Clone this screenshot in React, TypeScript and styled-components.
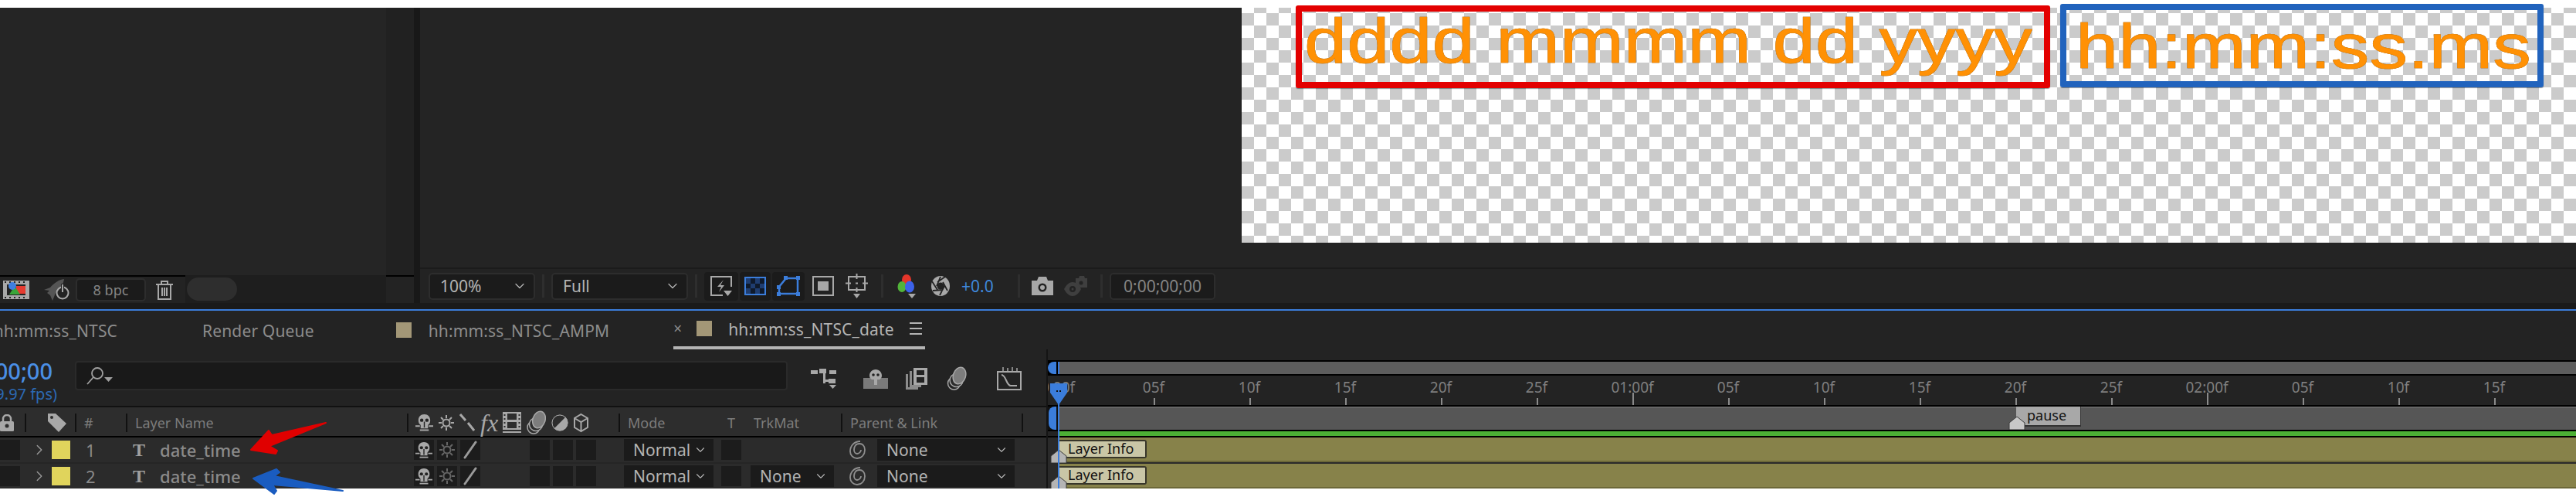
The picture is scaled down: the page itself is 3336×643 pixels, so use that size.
import React from "react";
import styled, { createGlobalStyle } from "styled-components";
import { ChevronDown, ChevronRight } from "lucide-react";

const ICON = "#a8a8a8";
const BLUE = "#3b7ddb";

const GlobalStyle = createGlobalStyle`
  html, body {
    margin: 0;
    background: #fff;
  }
  * {
    box-sizing: border-box;
  }
  #root {
    font-family: "Noto Sans", sans-serif;
  }
`;

const Page = styled.div`
  position: relative;
  width: 3336px;
  height: 643px;
  padding-top: 10px;
  background: #fff;
  overflow: hidden;
`;

/* ---------- viewers ---------- */

const ViewerRow = styled.div`
  display: flex;
  height: 382px;
`;

const LeftViewer = styled.div`
  display: flex;
  flex-direction: column;
  width: 536px;
  background: #242424;
`;

const LeftCanvas = styled.div`
  flex: 1;
  background: linear-gradient(to right, #252525 500px, #212121 500px);
`;

const LeftToolbar = styled.div`
  display: flex;
  align-items: center;
  height: 36px;
  border-top: 2px solid #000;
  background: #232323;
`;

const ViewerDivider = styled.div`
  width: 8px;
  background: #181818;
`;

const RightViewer = styled.div`
  display: flex;
  flex: 1;
  flex-direction: column;
  background: #242424;
`;

const RightCanvas = styled.div`
  display: flex;
  height: 336px;
  padding-left: 1064px;
`;

const Checker = styled.div`
  position: relative;
  flex: 1;
  height: 304px;
  background: conic-gradient(#cbcbcb 25%, #fff 0 50%, #cbcbcb 0 75%, #fff 0);
  background-size: 32px 32px;
  background-position: 0 -9px;
`;

const AnnotationBox = styled.div<{ $color: string; $left: number; $top: number; $w: number; $h: number }>`
  position: absolute;
  left: ${(p) => p.$left}px;
  top: ${(p) => p.$top}px;
  width: ${(p) => p.$w}px;
  height: ${(p) => p.$h}px;
  border: 8px solid ${(p) => p.$color};
  border-radius: 3px;
  box-shadow: 0 1px 1px #0006;
`;

const CompText = styled.span<{ $x: number; $y: number }>`
  position: absolute;
  left: ${(p) => p.$x}px;
  top: ${(p) => p.$y}px;
  font-family: "Liberation Sans", sans-serif;
  font-size: 82px;
  line-height: 1;
  white-space: nowrap;
  color: #ff9105;
  -webkit-text-stroke: 0.7px #ff9105;
  filter: drop-shadow(0 0 0.5px #555);
  transform: scaleX(1.21);
  transform-origin: left top;
`;

const RightToolbar = styled.div`
  display: flex;
  align-items: center;
  height: 46px;
  border-top: 2px solid #1b1b1b;
  background: #232323;
`;

const Slot = styled.div<{ $ml?: number; $w?: number }>`
  display: flex;
  flex: none;
  align-items: center;
  margin-left: ${(p) => p.$ml ?? 0}px;
  ${(p) => (p.$w ? `width: ${p.$w}px;` : "")}
`;

const SelectBox = styled.div<{ $ml: number; $w: number; $center?: boolean; $h?: number }>`
  display: flex;
  flex: none;
  align-items: center;
  justify-content: ${(p) => (p.$center ? "center" : "space-between")};
  width: ${(p) => p.$w}px;
  height: ${(p) => p.$h ?? 35}px;
  margin-left: ${(p) => p.$ml}px;
  padding: 0 8px 0 13px;
  border: 2px solid #2d2d2d;
  border-radius: 5px;
  background: #1b1b1b;
  font-size: 21px;
  color: #b4b4b4;
  ${(p) => (p.$center ? "padding: 0; color: #858585;" : "")}
`;

const ToolSeparator = styled.div<{ $ml: number }>`
  flex: none;
  width: 3px;
  height: 30px;
  margin-left: ${(p) => p.$ml}px;
  background: #2e2e2e;
`;

const ToggleCell = styled.div<{ $ml: number; $w: number }>`
  display: flex;
  flex: none;
  align-items: center;
  justify-content: center;
  width: ${(p) => p.$w}px;
  height: 37px;
  margin-left: ${(p) => p.$ml}px;
  border-radius: 4px;
  background: #1b1b1b;
`;

const Exposure = styled.span`
  font-size: 21px;
  color: #3f88dd;
`;

const BpcBox = styled(SelectBox)`
  height: 30px;
  font-size: 18px;
`;

const DarkStrip = styled.div`
  display: flex;
  align-items: center;
  align-self: stretch;
  width: 260px;
  margin: -2px 0 0 16px;
  background: #1e1e1e;
`;

const Pill = styled.div`
  width: 65px;
  height: 30px;
  margin-left: 2px;
  border-radius: 15px;
  background: #2e2e2e;
`;

const Band = styled.div`
  height: 8px;
  background: #1a1a1a;
`;

const BlueLine = styled.div`
  height: 2px;
  background: ${BLUE};
`;

/* ---------- comp tabs ---------- */

const TabBar = styled.div`
  display: flex;
  align-items: center;
  height: 50px;
  background: #232323;
  font-size: 21px;
  letter-spacing: 0.15px;
  color: #8c8c8c;
  white-space: nowrap;
`;

const FirstTab = styled.div`
  display: flex;
  flex: none;
  justify-content: flex-end;
  width: 152px;
  padding-top: 2px;
`;

const TabLabel = styled.span<{ $ml: number; $active?: boolean }>`
  flex: none;
  margin-left: ${(p) => p.$ml}px;
  padding-top: 2px;
  ${(p) => (p.$active ? "color: #b4b4b4;" : "")}
`;

const Swatch = styled.span<{ $ml: number }>`
  flex: none;
  width: 20px;
  height: 20px;
  margin-left: ${(p) => p.$ml}px;
  background: #a39777;
`;

const ActiveTab = styled.div`
  display: flex;
  flex: none;
  align-items: center;
  align-self: stretch;
  width: 326px;
  margin-left: 83px;
  border-bottom: 4px solid #b4b4b4;
`;

const TabClose = styled.span`
  width: 10px;
  font-size: 19px;
  color: #8c8c8c;
`;

const TabMenu = styled.span`
  width: 16px;
  height: 16px;
  margin-left: 20px;
  background: repeating-linear-gradient(#b4b4b4 0 2px, transparent 2px 7px);
`;

/* ---------- timeline, left side ---------- */

const TimelineBody = styled.div`
  display: flex;
  height: 180px;
`;

const LeftPane = styled.div`
  flex: none;
  width: 1357px;
  border-right: 2px solid #141414;
  background: #232323;
`;

const ToolRow = styled.div`
  display: flex;
  align-items: center;
  height: 75px;
  padding-top: 3px;
  border-bottom: 2px solid #111;
`;

const TimeBlock = styled.div`
  display: flex;
  flex: none;
  flex-direction: column;
  align-items: flex-end;
  width: 74px;
  margin-top: 8px;
  white-space: nowrap;
`;

const TimeCode = styled.div`
  padding-right: 6px;
  font-size: 29px;
  line-height: 32px;
  font-weight: 500;
  color: #4a8fe6;
`;

const Fps = styled.div`
  font-size: 20px;
  line-height: 28px;
  color: #2c69b3;
`;

const SearchBox = styled.div`
  display: flex;
  flex: none;
  align-items: center;
  width: 923px;
  height: 38px;
  margin: -8px 0 0 23px;
  padding-left: 13px;
  border: 2px solid #2a2a2a;
  border-radius: 4px;
  background: #191919;
`;

const LayerGrid = styled.div`
  display: grid;
  grid-template-columns: 32px 65px 66px 364px 274px 133px 38px 117px 234px 32px;
  align-items: center;
`;

const HeaderRow = styled(LayerGrid)`
  height: 37px;
  padding-top: 2px;
  background: #2d2d2d;
  font-size: 18px;
  color: #7c7c7c;
`;

const HeaderCell = styled.div<{ $gap?: number }>`
  display: flex;
  align-items: center;
  gap: ${(p) => p.$gap ?? 10}px;
  white-space: nowrap;
`;

const ColumnRule = styled.span`
  flex: none;
  width: 2px;
  height: 24px;
  background: #111;
`;

const SwitchIcons = styled.div`
  display: flex;
  align-items: center;
  gap: 7px;
`;

const FxLabel = styled.span`
  width: 22px;
  font-family: "Liberation Serif", serif;
  font-size: 32px;
  font-style: italic;
  line-height: 1;
  color: ${ICON};
`;

const LayerRow = styled(LayerGrid)<{ $last?: boolean }>`
  height: ${(p) => (p.$last ? 32 : 36)}px;
  padding-bottom: ${(p) => (p.$last ? 0 : 2)}px;
  border-top: ${(p) => (p.$last ? "none" : "2px solid #000")};
  background: ${(p) => (p.$last ? "#2b2b2b" : "linear-gradient(#2b2b2b 32px, #252525 32px)")};
  font-size: 21px;
  color: #8a8a8a;
`;

const RowCell = styled.div<{ $pad?: number }>`
  display: flex;
  align-items: center;
  padding-left: ${(p) => p.$pad ?? 0}px;
  white-space: nowrap;
`;

const SwitchCell = styled.div<{ $ml?: number }>`
  display: flex;
  flex: none;
  align-items: center;
  justify-content: center;
  width: 26px;
  height: 26px;
  margin-left: ${(p) => p.$ml ?? 0}px;
  background: #1c1c1c;
`;

const LabelChip = styled.span`
  flex: none;
  width: 24px;
  height: 24px;
  margin-left: 5px;
  background: #e0d45c;
`;

const LayerNumber = styled.span`
  padding-left: 14px;
  font-size: 22px;
  color: #8a8a8a;
`;

const TypeGlyph = styled.span`
  width: 16px;
  font-family: "Liberation Serif", serif;
  font-size: 24px;
  font-weight: 700;
  line-height: 1;
  color: #a0a0a0;
`;

const LayerName = styled.span`
  margin-left: 19px;
  font-size: 22px;
  font-weight: 500;
  color: #8a8a8a;
`;

const RowSelect = styled.div<{ $w: number }>`
  display: flex;
  flex: none;
  align-items: center;
  justify-content: space-between;
  width: ${(p) => p.$w}px;
  height: 28px;
  padding: 0 8px 0 12px;
  background: #1b1b1b;
  color: #b4b4b4;
`;

/* ---------- timeline, right side ---------- */

const RightPane = styled.div`
  position: relative;
  flex: 1;
  overflow: hidden;
  background: #232323;
`;

const NavBar = styled.div`
  display: flex;
  height: 20px;
  margin-top: 14px;
  border-top: 2px solid #000;
  border-bottom: 2px solid #000;
  background: #000;
`;

const CapLeft = styled.div<{ $ml: number; $w: number }>`
  flex: none;
  width: ${(p) => p.$w}px;
  margin-left: ${(p) => p.$ml}px;
  border-radius: 8px 0 0 8px;
  background: ${BLUE};
`;

const GreyFill = styled.div`
  flex: 1;
  margin-left: 2px;
  border-left: 2px solid #3a78d8;
  background: #5d5d5d;
`;

const Ruler = styled.div`
  display: flex;
  height: 38px;
  margin-left: -49px;
  background: #232323;
`;

const RulerCell = styled.div`
  position: relative;
  flex: none;
  width: 124px;
  height: 38px;
  text-align: center;
  font-size: 19px;
  line-height: 30px;
  color: #7e7e7e;
`;

const Tick = styled.span<{ $major: boolean }>`
  position: absolute;
  bottom: 0;
  left: 62px;
  width: 2px;
  height: ${(p) => (p.$major ? 16 : 9)}px;
  background: #8a8a8a;
`;

const WorkArea = styled.div`
  position: relative;
  display: flex;
  height: 34px;
  border-top: 2px solid #000;
  border-bottom: 2px solid #000;
  background: #111;
`;

const WorkFill = styled.div`
  flex: 1;
  margin-left: 2px;
  border-top: 2px solid #666;
  background: #565656;
`;

const GreenTrack = styled.div`
  height: 8px;
  padding-left: 13px;
  border-bottom: 2px solid #000;
  background: #232323;
`;

const GreenFill = styled.div`
  height: 6px;
  background: #4cb035;
`;

const Track = styled.div<{ $last?: boolean }>`
  position: relative;
  height: ${(p) => (p.$last ? 32 : 34)}px;
  padding-left: 14px;
  padding-bottom: ${(p) => (p.$last ? 0 : 2)}px;
  background: #2a2a2a;
`;

const TrackBar = styled.div`
  height: 32px;
  padding-top: 3px;
  border-bottom: 2px solid #6c6838;
  background: #87824a;
`;

const LayerInfo = styled.div`
  width: 114px;
  height: 24px;
  padding-left: 12px;
  border: 2px solid #38362a;
  border-left: none;
  border-radius: 0 3px 3px 0;
  background: #c9c6a6;
  font-size: 18px;
  line-height: 19px;
  color: #111;
`;

const MarkerFlag = styled.svg<{ $left: number; $top: number }>`
  position: absolute;
  left: ${(p) => p.$left}px;
  top: ${(p) => p.$top}px;
`;

const PauseFlag = styled.div`
  position: absolute;
  left: 1254px;
  top: 0;
  width: 84px;
  height: 26px;
  padding-left: 14px;
  border-right: 1px solid #333;
  border-bottom: 2px solid #333;
  background: #a8a8a8;
  font-size: 18px;
  line-height: 23px;
  color: #111;
`;

const Playhead = styled.svg`
  position: absolute;
  left: 2px;
  top: 44px;
  pointer-events: none;
`;

const ArrowOverlay = styled.svg`
  position: absolute;
  left: 320px;
  top: 540px;
`;

/* ---------- drawn icons ---------- */

const ShyIcon = ({ w = 23, color = ICON }: { w?: number; color?: string }) => (
  <svg width={w} height={w} viewBox="0 0 24 24">
    <path
      d="M12 1C7 1 4 4.500 4 9c0 3 1 5 3 6.500V20h10v-4.500c2-1.500 3-3.500 3-6.500 0-4.500-3-8-8-8z"
      fill={color}
    />
    <circle cx="8.500" cy="9" r="2.300" fill="#222" />
    <circle cx="15.500" cy="9" r="2.300" fill="#222" />
    <path d="M12 11v8" stroke="#222" strokeWidth="1.500" />
    <path d="M0 17h6M18 17h6M6 22.500h12" stroke={color} strokeWidth="2" />
  </svg>
);

const SunIcon = ({ color = ICON }: { color?: string }) => (
  <svg width="20" height="22" viewBox="0 0 20 22" fill="none" stroke={color} strokeWidth="2">
    <circle cx="10" cy="11" r="4.500" />
    <path d="M10 1v4M10 17v4M0 11h4M16 11h4M3 4l3 3M14 15l3 3M17 4l-3 3M6 15l-3 3" />
  </svg>
);

const CollapseIcon = () => (
  <svg width="20" height="24" viewBox="0 0 20 24" fill="none" stroke={ICON} strokeWidth="3">
    <path d="M1 1l7 8M11 12l8 10" />
  </svg>
);

const FrameIcon = () => (
  <svg width="24" height="28" viewBox="0 0 24 28">
    <path d="M0 0h24v23H0z" fill={ICON} />
    <path d="M1.500 3h2v2h-2zM1.500 8h2v2h-2zM1.500 13h2v2h-2zM1.500 18h2v2h-2zM20.500 3h2v2h-2zM20.500 8h2v2h-2zM20.500 13h2v2h-2zM20.500 18h2v2h-2z" fill="#2d2d2d" />
    <rect x="6" y="2" width="12" height="8" fill="#2d2d2d" />
    <rect x="6" y="13" width="12" height="8" fill="#2d2d2d" />
    <path d="M0 26h24" stroke={ICON} strokeWidth="2" />
  </svg>
);

const MotionBlurIcon = ({ w = 25 }: { w?: number }) => (
  <svg width={w} height="32" viewBox="0 0 25 32" fill="none" stroke={ICON} strokeWidth="1.500">
    <circle cx="9" cy="22" r="8" />
    <circle cx="12" cy="18" r="8.500" fill="#2d2d2d" />
    <ellipse cx="16" cy="12" rx="8" ry="11" fill="#7d7d7d" transform="rotate(18 16 12)" />
  </svg>
);

const AdjustIcon = () => (
  <svg width="22" height="26" viewBox="0 0 22 26">
    <circle cx="11" cy="13" r="10.500" fill={ICON} />
    <path d="M3.500 20.500L18.500 5.500A10.500 10.500 0 0 0 3.500 20.500z" fill="#2d2d2d" />
    <circle cx="11" cy="13" r="10" fill="none" stroke={ICON} />
  </svg>
);

const CubeIcon = () => (
  <svg width="19" height="26" viewBox="0 0 19 26" fill="none" stroke={ICON} strokeWidth="2">
    <path d="M9.500 2L18 7v12l-8.500 5L1 19V7zM1 7l8.500 5L18 7M9.500 12v12" />
  </svg>
);

const LockIcon = () => (
  <svg width="18" height="22" viewBox="0 0 18 22">
    <path d="M4 10V6a5 5 0 0 1 10 0v4" fill="none" stroke={ICON} strokeWidth="2.500" />
    <rect x="0" y="9" width="18" height="13" rx="1.500" fill={ICON} />
    <circle cx="9" cy="15" r="2.500" fill="#2d2d2d" />
  </svg>
);

const TagIcon = () => (
  <svg width="25" height="24" viewBox="0 0 25 24">
    <path d="M1 0h10l14 13-10 11L1 10z" fill={ICON} />
    <circle cx="6" cy="5" r="2" fill="#2d2d2d" />
  </svg>
);

const SpiralIcon = () => (
  <svg width="23" height="26" viewBox="0 0 23 26" fill="none" stroke="#8f8f8f" strokeWidth="1.800">
    <path d="M15 2C7 2 2 8 2 15c0 5 4 9 9 9 6 0 10-5 10-11 0-5-3-8-7-8-5 0-7 4-7 8 0 3 2 5 4 5 3 0 5-3 5-5" />
  </svg>
);

const SlashIcon = () => (
  <svg width="18" height="24" viewBox="0 0 18 24" fill="none" stroke="#9a9a9a" strokeWidth="3" strokeLinecap="round">
    <path d="M2 22L16 2" />
  </svg>
);

const SearchIcon = () => (
  <svg width="36" height="24" viewBox="0 0 36 24" fill="none" stroke="#a0a0a0" strokeWidth="1.800">
    <circle cx="14" cy="9" r="7" />
    <path d="M9 14L1 23" />
    <path d="M23 14h11l-5.500 6z" fill="#a0a0a0" stroke="none" />
  </svg>
);

const FlowIcon = () => (
  <svg width="34" height="26" viewBox="0 0 34 26" fill={ICON}>
    <rect x="0" y="2" width="9" height="5" />
    <rect x="11" y="0" width="9" height="6" />
    <rect x="24" y="2" width="9" height="5" />
    <rect x="16" y="5" width="3" height="14" />
    <rect x="16" y="14" width="15" height="3" />
    <rect x="23" y="13" width="9" height="6" />
    <path d="M24 21h9l-4.500 5z" />
  </svg>
);

const DraftIcon = () => (
  <svg width="32" height="26" viewBox="0 0 32 26">
    <rect x="0" y="12" width="32" height="14" fill="#7a7a7a" />
    <path d="M16 1c-5 0-8 4-8 8 0 2 1 4 3 5h3v7h4v-7h3c2-1 3-3 3-5 0-4-3-8-8-8z" fill={ICON} />
    <circle cx="13" cy="8" r="1.800" fill="#222" />
    <circle cx="19" cy="8" r="1.800" fill="#222" />
  </svg>
);

const FilmStackIcon = () => (
  <svg width="28" height="28" viewBox="0 0 28 28">
    <path d="M0 8h3v17h13v3H0z" fill="#8c8c8c" />
    <path d="M5 4h3v18h12v3H5z" fill="#8c8c8c" />
    <rect x="10" y="0" width="18" height="22" fill={ICON} />
    <rect x="14" y="3" width="10" height="6" fill="#232323" />
    <rect x="14" y="12" width="10" height="7" fill="#232323" />
  </svg>
);

const GraphIcon = () => (
  <svg width="32" height="30" viewBox="0 0 32 30" fill="none" stroke={ICON} strokeWidth="2">
    <path d="M1 6h30v23H1z" />
    <path d="M8 0v5M14 1v4M20 0v5M26 1v4" strokeWidth="1.500" />
    <path d="M6 10c6 0 6 14 12 14h8" />
  </svg>
);

const FastPreviewIcon = () => (
  <svg width="28" height="26" viewBox="0 0 28 26" fill="none" stroke={ICON} strokeWidth="2">
    <path d="M27 14V1H1v24h15" />
    <path d="M17 5L9 14h5l-3 7 7-9h-5z" fill={ICON} stroke="none" />
    <path d="M17 19h11l-5.500 7z" fill={ICON} stroke="none" />
  </svg>
);

const TransparencyIcon = () => (
  <svg width="28" height="24" viewBox="0 0 28 24">
    <rect x="1" y="1" width="26" height="22" fill="#0f1a2c" stroke={BLUE} strokeWidth="2" />
    <path d="M2 2h6v7H2zM14 2h6v7h-6zM8 9h6v6H8zM20 9h6v6h-6zM2 15h6v7H2zM14 15h6v7h-6z" fill="#1f3d70" />
  </svg>
);

const MaskIcon = () => (
  <svg width="30" height="26" viewBox="0 0 30 26" fill="none" stroke={BLUE} strokeWidth="2.500">
    <path d="M12 3h15v20H3v-9z" />
    <g fill={BLUE} stroke="none">
      <rect x="9" y="0" width="5" height="5" />
      <rect x="25" y="0" width="5" height="5" />
      <rect x="25" y="21" width="5" height="5" />
      <rect x="0" y="21" width="5" height="5" />
      <rect x="0" y="12" width="5" height="5" />
    </g>
  </svg>
);

const SafeIcon = () => (
  <svg width="28" height="26" viewBox="0 0 28 26">
    <rect x="1" y="1" width="26" height="24" fill="none" stroke={ICON} strokeWidth="2" />
    <rect x="7" y="7" width="14" height="12" fill={ICON} />
  </svg>
);

const GuidesIcon = () => (
  <svg width="29" height="32" viewBox="0 0 29 32" fill="none" stroke={ICON} strokeWidth="2">
    <path d="M4 4h21v17H4z" />
    <path d="M14.500 0v7M14.500 18v6M0 12.500h7M22 12.500h7M13 12.500h3" />
    <path d="M19 26h9l-4.500 6z" fill={ICON} stroke="none" transform="translate(-9 0)" />
  </svg>
);

const ColorIcon = () => (
  <svg width="26" height="32" viewBox="0 0 26 32">
    <ellipse cx="12" cy="8" rx="6" ry="7" fill="#e4352a" />
    <ellipse cx="6" cy="17" rx="5.500" ry="7" fill="#52b43a" />
    <ellipse cx="16" cy="17" rx="6" ry="7.500" fill="#3c62ea" />
    <path d="M14 26h10l-5 6z" fill={ICON} />
  </svg>
);

const ApertureIcon = () => (
  <svg width="24" height="26" viewBox="0 0 24 26">
    <ellipse cx="12" cy="13" rx="12" ry="13" fill={ICON} />
    <g stroke="#232323" strokeWidth="1.800" fill="none">
      <path d="M8 8L18 1M15 8l6 11M17 13l-6 12M15 18L2 19M8 18L1 7M7 13l5-12" />
    </g>
    <circle cx="12" cy="13" r="4.500" fill="#232323" />
  </svg>
);

const CameraIcon = () => (
  <svg width="28" height="24" viewBox="0 0 28 24">
    <path d="M0 5h7l2-5h10l2 5h7v19H0z" fill={ICON} />
    <circle cx="14" cy="14" r="5.500" fill="#232323" />
    <circle cx="14" cy="14" r="3" fill={ICON} />
  </svg>
);

const EyeCameraIcon = () => (
  <svg width="30" height="30" viewBox="0 0 30 30">
    <path d="M15 5h4l1-3h6l1 3h3v12H15z" fill="#3f3f3f" />
    <circle cx="22" cy="11" r="2.500" fill="#232323" />
    <path d="M0 19c3-6 7-9 11-9s8 3 11 9c-3 6-7 9-11 9S3 25 0 19z" fill="#3f3f3f" />
    <circle cx="11" cy="19" r="4" fill="#232323" />
    <circle cx="11" cy="19" r="1.500" fill="#3f3f3f" />
  </svg>
);

const FlowchartFilmIcon = () => (
  <svg width="34" height="24" viewBox="0 0 34 24">
    <rect width="34" height="24" fill={ICON} />
    <path d="M2 1h2v2H2zM8 1h2v2H8zM14 1h2v2h-2zM20 1h2v2h-2zM26 1h2v2h-2zM2 21h2v2H2zM8 21h2v2H8zM14 21h2v2h-2zM20 21h2v2h-2zM26 21h2v2h-2z" fill="#232323" />
    <rect x="5" y="5" width="24" height="14" fill="#232323" />
    <rect x="17" y="7" width="12" height="10" fill="#e53b30" />
    <path d="M15 7l7 11H8z" fill="#3aa53a" />
    <circle cx="12" cy="7" r="5" fill="#3f7fe0" />
  </svg>
);

const RocketPowerIcon = () => (
  <svg width="34" height="28" viewBox="0 0 34 28">
    <path d="M1 14l8-3C14 5 20 1 27 0c-1 7-5 13-11 18l-4 10-3-7-4-3 3-3z" fill="#555" />
    <circle cx="25" cy="18" r="7.500" fill="none" stroke={ICON} strokeWidth="2" />
    <rect x="23" y="6" width="4" height="12" fill="#232323" />
    <rect x="24" y="7" width="2" height="10" fill={ICON} />
  </svg>
);

const TrashIcon = () => (
  <svg width="22" height="25" viewBox="0 0 22 25" fill="none" stroke={ICON} strokeWidth="2">
    <path d="M0 5h22M7 5V1h8v4M3 5v19h16V5M8 9v11M11 9v11M14 9v11" />
  </svg>
);

const MarkerGlyph = ({ fill, top, left }: { fill: string; top: number; left: number }) => (
  <MarkerFlag $left={left} $top={top} width="22" height="17" viewBox="0 0 22 17">
    <path d="M1 17V8l10-8 10 8v9z" fill={fill} stroke="#3a3a3a" strokeWidth="1" />
  </MarkerFlag>
);

const rulerLabels = [
  "0:00f", "05f", "10f", "15f", "20f", "25f",
  "01:00f", "05f", "10f", "15f", "20f", "25f",
  "02:00f", "05f", "10f", "15f",
];

const layers = [
  { id: 1, matte: false },
  { id: 2, matte: true },
];

const App: React.FC = () => {
  return (
    <Page>
      <GlobalStyle />
      <ViewerRow>
        <LeftViewer>
          <LeftCanvas />
          <LeftToolbar>
            <Slot $ml={4}><FlowchartFilmIcon /></Slot>
            <Slot $ml={18}><RocketPowerIcon /></Slot>
            <BpcBox $ml={8} $w={91} $center>8 bpc</BpcBox>
            <Slot $ml={13}><TrashIcon /></Slot>
            <DarkStrip><Pill /></DarkStrip>
          </LeftToolbar>
        </LeftViewer>
        <ViewerDivider />
        <RightViewer>
          <RightCanvas>
            <Checker>
              <CompText $x={81} $y={2}>dddd mmmm dd yyyy</CompText>
              <CompText $x={1080} $y={9}>hh:mm:ss.ms</CompText>
              <AnnotationBox $color="#e30000" $left={70} $top={-3} $w={977} $h={107} />
              <AnnotationBox $color="#2163bd" $left={1060} $top={-5} $w={626} $h={108} />
            </Checker>
          </RightCanvas>
          <RightToolbar>
            <SelectBox $ml={11} $w={138}>100%<ChevronDown size={20} strokeWidth={1.5} /></SelectBox>
            <ToolSeparator $ml={9} />
            <SelectBox $ml={9} $w={177}>Full<ChevronDown size={20} strokeWidth={1.5} /></SelectBox>
            <ToolSeparator $ml={9} />
            <ToggleCell $ml={9} $w={44}><FastPreviewIcon /></ToggleCell>
            <ToggleCell $ml={2} $w={40}><TransparencyIcon /></ToggleCell>
            <ToggleCell $ml={2} $w={42}><MaskIcon /></ToggleCell>
            <Slot $ml={10}><SafeIcon /></Slot>
            <Slot $ml={15}><GuidesIcon /></Slot>
            <ToolSeparator $ml={17} />
            <Slot $ml={18}><ColorIcon /></Slot>
            <Slot $ml={18}><ApertureIcon /></Slot>
            <Slot $ml={15} $w={41}><Exposure>+0.0</Exposure></Slot>
            <ToolSeparator $ml={32} />
            <Slot $ml={15}><CameraIcon /></Slot>
            <Slot $ml={14}><EyeCameraIcon /></Slot>
            <ToolSeparator $ml={17} />
            <SelectBox $ml={9} $w={137} $center>0;00;00;00</SelectBox>
          </RightToolbar>
        </RightViewer>
      </ViewerRow>
      <Band />
      <BlueLine />
      <TabBar>
        <FirstTab>hh:mm:ss_NTSC</FirstTab>
        <TabLabel $ml={110}>Render Queue</TabLabel>
        <Swatch $ml={106} />
        <TabLabel $ml={22}>hh:mm:ss_NTSC_AMPM</TabLabel>
        <ActiveTab>
          <TabClose>×</TabClose>
          <Swatch $ml={20} />
          <TabLabel $ml={21} $active>hh:mm:ss_NTSC_date</TabLabel>
          <TabMenu />
        </ActiveTab>
      </TabBar>
      <TimelineBody>
        <LeftPane>
          <ToolRow>
            <TimeBlock>
              <TimeCode>00;00</TimeCode>
              <Fps>9.97 fps)</Fps>
            </TimeBlock>
            <SearchBox><SearchIcon /></SearchBox>
            <Slot $ml={30}><FlowIcon /></Slot>
            <Slot $ml={34}><DraftIcon /></Slot>
            <Slot $ml={23}><FilmStackIcon /></Slot>
            <Slot $ml={24}><MotionBlurIcon w={28} /></Slot>
            <Slot $ml={38}><GraphIcon /></Slot>
          </ToolRow>
          <HeaderRow>
            <HeaderCell><LockIcon /></HeaderCell>
            <HeaderCell $gap={27}><ColumnRule /><TagIcon /></HeaderCell>
            <HeaderCell><ColumnRule />#</HeaderCell>
            <HeaderCell><ColumnRule />Layer Name</HeaderCell>
            <HeaderCell $gap={9}>
              <ColumnRule />
              <SwitchIcons>
                <ShyIcon />
                <SunIcon />
                <CollapseIcon />
                <FxLabel>fx</FxLabel>
                <FrameIcon />
                <MotionBlurIcon />
                <AdjustIcon />
                <CubeIcon />
              </SwitchIcons>
            </HeaderCell>
            <HeaderCell><ColumnRule />Mode</HeaderCell>
            <RowCell $pad={8}>T</RowCell>
            <RowCell $pad={4}>TrkMat</RowCell>
            <HeaderCell><ColumnRule />Parent &amp; Link</HeaderCell>
            <HeaderCell><ColumnRule /></HeaderCell>
          </HeaderRow>
          {layers.map((layer, i) => (
            <LayerRow key={layer.id} $last={i === layers.length - 1}>
              <RowCell><SwitchCell /></RowCell>
              <RowCell $pad={8}>
                <ChevronRight size={22} strokeWidth={1.5} color="#9a9a9a" />
                <LabelChip />
              </RowCell>
              <LayerNumber>{layer.id}</LayerNumber>
              <RowCell $pad={9}>
                <TypeGlyph>T</TypeGlyph>
                <LayerName>date_time</LayerName>
              </RowCell>
              <RowCell $pad={9}>
                <SwitchCell><ShyIcon w={22} /></SwitchCell>
                <SwitchCell $ml={4}><SunIcon color="#666" /></SwitchCell>
                <SwitchCell $ml={4}><SlashIcon /></SwitchCell>
                <SwitchCell $ml={64} />
                <SwitchCell $ml={4} />
                <SwitchCell $ml={4} />
              </RowCell>
              <RowCell $pad={7}>
                <RowSelect $w={116}>Normal<ChevronDown size={18} strokeWidth={1.5} /></RowSelect>
              </RowCell>
              <RowCell><SwitchCell /></RowCell>
              <RowCell>
                {layer.matte && (
                  <RowSelect $w={108}>None<ChevronDown size={18} strokeWidth={1.5} /></RowSelect>
                )}
              </RowCell>
              <RowCell $pad={10}>
                <SpiralIcon />
                <Slot $ml={14}>
                  <RowSelect $w={178}>None<ChevronDown size={18} strokeWidth={1.5} /></RowSelect>
                </Slot>
              </RowCell>
              <RowCell />
            </LayerRow>
          ))}
        </LeftPane>
        <RightPane>
          <NavBar>
            <CapLeft $ml={0} $w={11} />
            <GreyFill />
          </NavBar>
          <Ruler>
            {rulerLabels.map((label, i) => (
              <RulerCell key={i}>
                {label}
                <Tick $major={label.includes(":")} />
              </RulerCell>
            ))}
          </Ruler>
          <WorkArea>
            <CapLeft $ml={1} $w={10} />
            <WorkFill />
            <PauseFlag>pause</PauseFlag>
            <MarkerGlyph fill="#c8c8c8" left={1244} top={13} />
          </WorkArea>
          <GreenTrack><GreenFill /></GreenTrack>
          {layers.map((layer, i) => (
            <Track key={layer.id} $last={i === layers.length - 1}>
              <TrackBar><LayerInfo>Layer Info</LayerInfo></TrackBar>
              <MarkerGlyph fill="#b4b4b4" left={3} top={16} />
            </Track>
          ))}
          <Playhead width="24" height="136" viewBox="0 0 24 136">
            <path d="M1 0h22v12L12 28 1 12z" fill={BLUE} />
            <path d="M9 10h2M13 10h2" stroke="#111" strokeWidth="2" />
            <path d="M11 26h2v110h-2z" fill={BLUE} />
          </Playhead>
        </RightPane>
      </TimelineBody>
      <ArrowOverlay width="130" height="100" viewBox="0 0 130 100">
        <path
          d="M5 42L28 17l4 6L102 7 29 37l10 6-2 4z"
          fill="#e00000"
          stroke="#e00000"
          strokeWidth="2"
          strokeLinejoin="round"
        />
        <path
          d="M8 79L38 67l4 4-7 5 89 19-91-8 5 8-3 4z"
          fill="#1a5cc0"
          stroke="#1a5cc0"
          strokeWidth="2"
          strokeLinejoin="round"
        />
      </ArrowOverlay>
    </Page>
  );
};

export default App;
